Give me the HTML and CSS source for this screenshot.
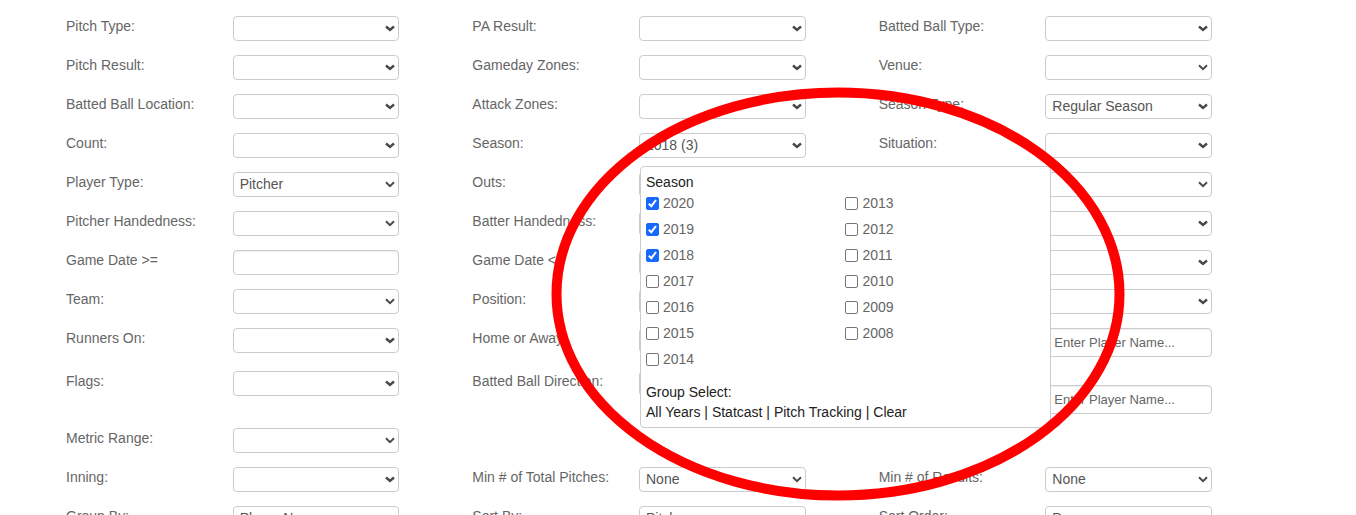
FILE: index.html
```html
<!DOCTYPE html>
<html lang="en">
<head>
<meta charset="utf-8">
<title>Pitch Search</title>
<link rel="stylesheet" href="styles.css">
</head>
<body>
<form class="search">
  <div class="field"><label for="pitch-type">Pitch Type:</label><select id="pitch-type" class="multi"></select></div>
  <div class="field"><label for="pa-result">PA Result:</label><select id="pa-result" class="multi"></select></div>
  <div class="field"><label for="ball-type">Batted Ball Type:</label><select id="ball-type" class="multi"></select></div>

  <div class="field"><label for="pitch-result">Pitch Result:</label><select id="pitch-result" class="multi"></select></div>
  <div class="field"><label for="zones">Gameday Zones:</label><select id="zones" class="multi"></select></div>
  <div class="field"><label for="venue">Venue:</label><select id="venue"></select></div>

  <div class="field"><label for="location">Batted Ball Location:</label><select id="location" class="multi"></select></div>
  <div class="field"><label for="attack">Attack Zones:</label><select id="attack" class="multi"></select></div>
  <div class="field"><label for="season-type">Season Type:</label><select id="season-type" class="multi"><option>Regular Season</option></select></div>

  <div class="field"><label for="count">Count:</label><select id="count" class="multi"></select></div>
  <div class="field">
    <label for="season">Season:</label>
    <div class="anchor">
      <select id="season" class="multi"><option>2018 (3)</option></select>
      <div class="panel" role="group" aria-labelledby="season-title">
        <div id="season-title">Season</div>
        <div class="years">
          <label><input type="checkbox" checked>2020</label>
          <label><input type="checkbox" checked>2019</label>
          <label><input type="checkbox" checked>2018</label>
          <label><input type="checkbox">2017</label>
          <label><input type="checkbox">2016</label>
          <label><input type="checkbox">2015</label>
          <label><input type="checkbox">2014</label>
          <label><input type="checkbox">2013</label>
          <label><input type="checkbox">2012</label>
          <label><input type="checkbox">2011</label>
          <label><input type="checkbox">2010</label>
          <label><input type="checkbox">2009</label>
          <label><input type="checkbox">2008</label>
        </div>
        <div>Group Select:</div>
        <div><a href="#all">All Years</a> | <a href="#statcast">Statcast</a> | <a href="#tracking">Pitch Tracking</a> | <a href="#clear">Clear</a></div>
      </div>
      <svg class="ring" width="574" height="414" viewBox="0 0 574 414" aria-hidden="true"><ellipse cx="287" cy="207" rx="281.5" ry="201.5" fill="none" stroke="#f00" stroke-width="10"/></svg>
    </div>
  </div>
  <div class="field"><label for="situation">Situation:</label><select id="situation" class="multi"></select></div>

  <div class="field"><label for="player-type">Player Type:</label><select id="player-type"><option>Pitcher</option></select></div>
  <div class="field"><label for="outs">Outs:</label><select id="outs" class="multi"></select></div>
  <div class="field"><select aria-label="Opponent"></select></div>

  <div class="field"><label for="p-hand">Pitcher Handedness:</label><select id="p-hand"></select></div>
  <div class="field"><label for="b-hand">Batter Handedness:</label><select id="b-hand"></select></div>
  <div class="field"><select class="multi" aria-label="Quality of Contact"></select></div>

  <div class="field"><label for="date-from">Game Date &gt;=</label><input type="text" id="date-from"></div>
  <div class="field"><label for="date-to">Game Date &lt;=</label><input type="text" id="date-to"></div>
  <div class="field"><select class="multi" aria-label="Month"></select></div>

  <div class="field"><label for="team">Team:</label><select id="team"></select></div>
  <div class="field"><label for="position">Position:</label><select id="position"></select></div>
  <div class="field"><select class="multi" aria-label="Infield Alignment"></select></div>

  <div class="field"><label for="runners">Runners On:</label><select id="runners" class="multi"></select></div>
  <div class="field"><label for="home-away">Home or Away:</label><select id="home-away"></select></div>
  <div class="field"><input type="text" class="name" placeholder="Enter Player Name..." aria-label="Batters"></div>

  <div class="field"><label for="flags">Flags:</label><select id="flags" class="multi"></select></div>
  <div class="field"><label for="direction">Batted Ball Direction:</label><select id="direction" class="multi"></select></div>
  <div class="field spaced"><input type="text" class="name" placeholder="Enter Player Name..." aria-label="Pitchers"></div>

  <div class="field first"><label for="metric">Metric Range:</label><select id="metric"></select></div>

  <div class="field first"><label for="inning">Inning:</label><select id="inning" class="multi"></select></div>
  <div class="field"><label for="min-pitches">Min # of Total Pitches:</label><select id="min-pitches"><option>None</option></select></div>
  <div class="field"><label for="min-results">Min # of Results:</label><select id="min-results"><option>None</option></select></div>

  <div class="field"><label for="group-by">Group By:</label><select id="group-by"><option>Player Name</option></select></div>
  <div class="field"><label for="sort-by">Sort By:</label><select id="sort-by"><option>Pitches</option></select></div>
  <div class="field"><label for="order">Sort Order:</label><select id="order"><option>Desc</option></select></div>
</form>
</body>
</html>
```
FILE: styles.css
```css
* {
  box-sizing: border-box;
}

body {
  margin: 0;
  height: 100vh;
  overflow: hidden;
  background: #fff;
  color: #666;
  font: 14px/20px "Liberation Sans", Arial, sans-serif;
}

.search {
  display: grid;
  grid-template-columns: repeat(3, minmax(0, 1fr));
  align-items: start;
  gap: 14px 73px;
  padding: 16px 144px 16px 66px;
}

.field {
  display: grid;
  grid-template-columns: repeat(2, minmax(0, 1fr));
  align-items: start;
}

.field > label {
  grid-column: 1;
  white-space: nowrap;
}

.field > select,
.field > input,
.anchor {
  grid-column: 2;
}

.first {
  grid-column: 1;
}

.spaced {
  padding-top: 14px;
}

.anchor {
  position: relative;
}

select,
input[type="text"] {
  display: block;
  width: 100%;
  height: 25px;
  margin: 0;
  padding: 0 6px;
  border: 1px solid #ccc;
  border-radius: 4px;
  background-color: #fff;
  color: #555;
  font: inherit;
}

select {
  appearance: none;
  padding: 0 20px 2px 6px;
  background-image: url("data:image/svg+xml,%3Csvg xmlns='http://www.w3.org/2000/svg' width='10' height='7' viewBox='0 0 10 7'%3E%3Cpath d='M1 1.3 5 5.2 9 1.3' fill='none' stroke='%23484848' stroke-width='1.9'/%3E%3C/svg%3E");
  background-repeat: no-repeat;
  background-position: right 3px top 8px;
}

select.multi {
  background-image: url("data:image/svg+xml,%3Csvg xmlns='http://www.w3.org/2000/svg' width='10' height='7' viewBox='0 0 10 7'%3E%3Cpath d='M1 1.5 5 5 9 1.5' fill='none' stroke='%23484848' stroke-width='2.4'/%3E%3C/svg%3E");
}

input[type="text"] {
  box-shadow: inset 0 1px 1px #eee;
}

input.name {
  height: 29px;
  padding: 0 8px;
  font-size: 13px;
}

input::placeholder {
  color: #666;
  opacity: 1;
}

.panel {
  position: absolute;
  z-index: 1;
  top: 33px;
  left: 1px;
  width: 411px;
  padding: 5px;
  border: 1px solid #ccc;
  border-radius: 4px;
  background: #fff;
  color: #222;
}

.panel a {
  color: inherit;
  text-decoration: none;
}

.years {
  display: grid;
  grid-template-columns: 1fr 1fr;
  grid-template-rows: repeat(7, 20px);
  grid-auto-flow: column;
  row-gap: 6px;
  padding: 1px 0 13px;
  color: #666;
}

.years label {
  display: flex;
  align-items: center;
  gap: 4px;
}

.years input {
  appearance: none;
  width: 13px;
  height: 13px;
  margin: 0;
  border: 1px solid #767676;
  border-radius: 2px;
  background: #fff;
}

.years input:checked {
  border-color: #1668ff;
  background: #1668ff url("data:image/svg+xml,%3Csvg xmlns='http://www.w3.org/2000/svg' width='11' height='11' viewBox='0 0 11 11'%3E%3Cpath d='M1.8 5.8 4.3 8.2 9 2' fill='none' stroke='white' stroke-width='2'/%3E%3C/svg%3E") center no-repeat;
}

.ring {
  position: absolute;
  z-index: 2;
  top: -46px;
  left: -88px;
  pointer-events: none;
}
```
